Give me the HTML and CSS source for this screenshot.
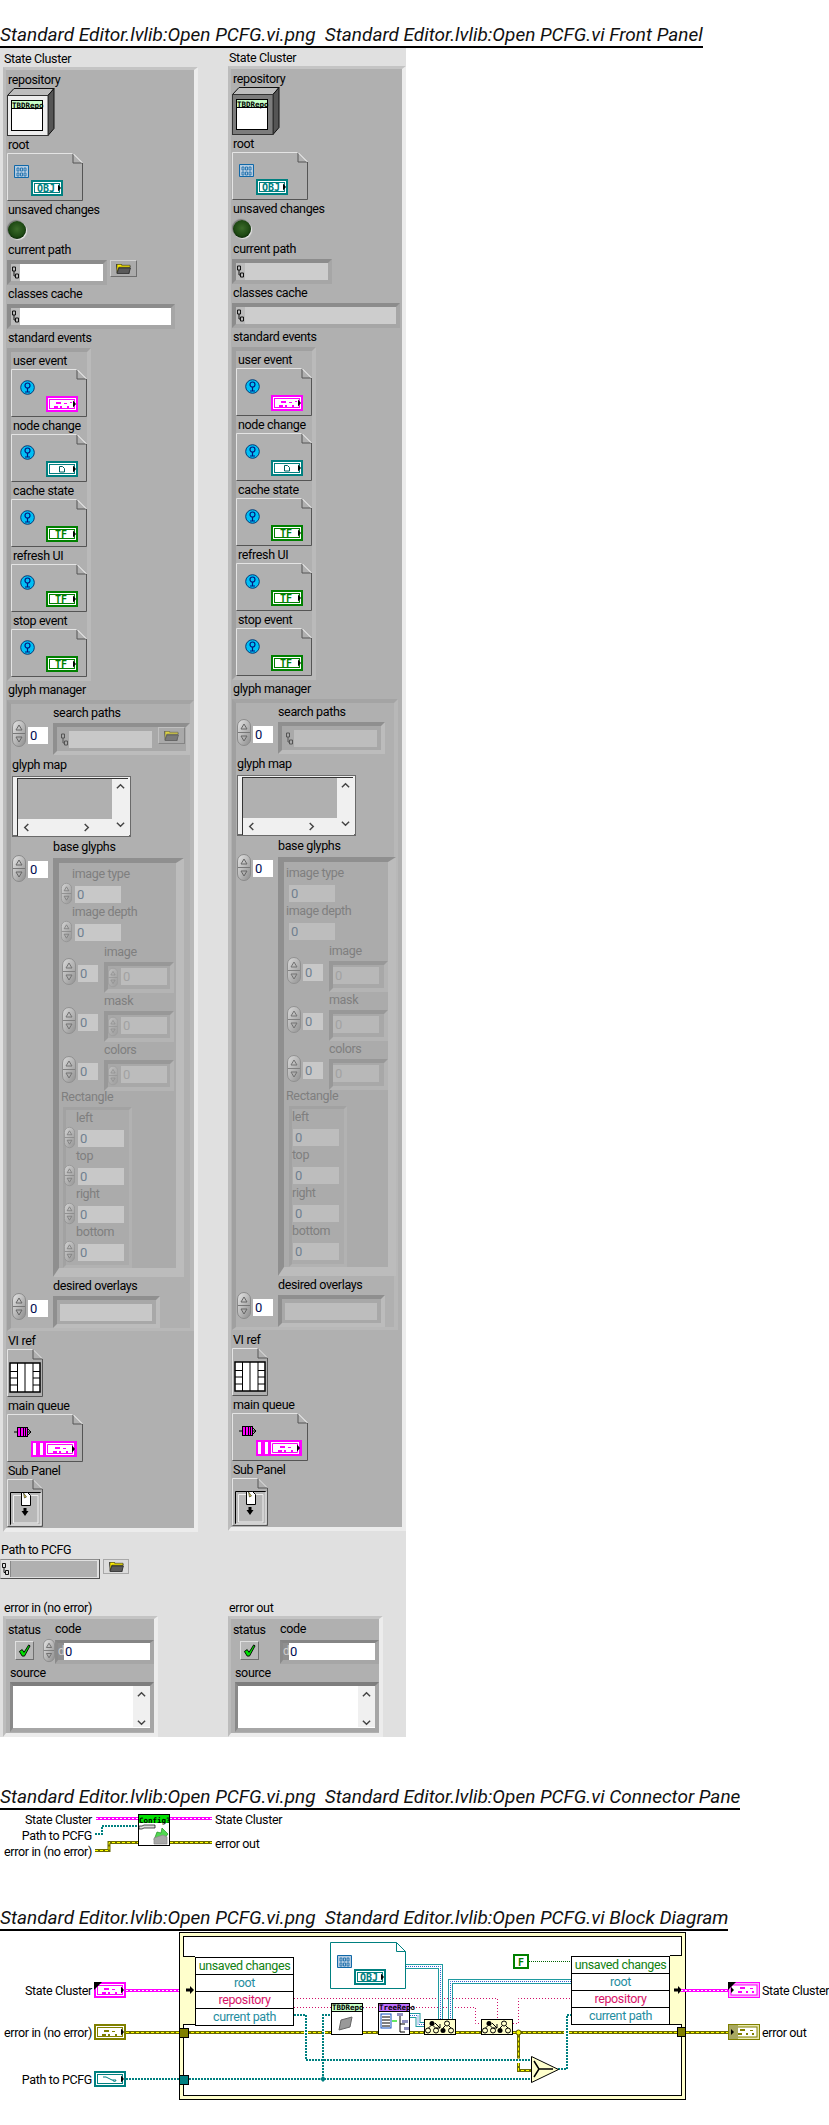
FILE: index.html
```html
<!DOCTYPE html>
<html lang="en">
<head>
<meta charset="utf-8">
<title>Open PCFG.vi</title>
<link rel="stylesheet" href="styles.css">
</head>
<body>
<svg class="defs" aria-hidden="true">
<defs>
<linearGradient id="gs" x1="0" y1="0" x2="1" y2="1"><stop offset="0" stop-color="#e6e6e6"/><stop offset="1" stop-color="#8c8c8c"/></linearGradient>
<symbol id="step" viewBox="0 0 14 27"><rect x=".5" y=".5" width="13" height="26" rx="6.5" fill="url(#gs)" stroke="#8a8a8a"/><path d="M1 13.5h12" stroke="#777"/><path d="M7 5l-3 5h6z" fill="none" stroke="#666"/><path d="M7 22l-3-5h6z" fill="none" stroke="#666"/></symbol>
<symbol id="pth" viewBox="0 0 7 12"><path d="M.5.5h3v4h-3zM3.5 7.5h3v4h-3zM2 4.5v5h1.500" fill="none" stroke="#111"/></symbol>
<symbol id="folder" viewBox="0 0 16 10"><path d="M0 0h5l1 1h-5v1h14l-1 8H2z" fill="#555" stroke="#222" stroke-width=".5"/><path d="M1 0h5v1h9v2H3L1 9z" fill="#ffee00" stroke="#222" stroke-width=".6"/><path d="M3 4h12.500l-2 6H1z" fill="#5a5a5a" stroke="#222" stroke-width=".6"/></symbol>
<symbol id="pg76" viewBox="0 0 76 48"><path d="M.5 47.500V.5H66L75.500 10" fill="none" stroke="#e4e4e4"/><path d="M.5 47.500h75V10H66V.5" fill="none" stroke="#555"/><path d="M66 .5l9.500 9.500" fill="none" stroke="#e4e4e4"/></symbol>
<symbol id="pg36" viewBox="0 0 36 48"><path d="M.5 47.500V.5H26L35.500 10" fill="none" stroke="#e4e4e4"/><path d="M.5 47.500h35V10H26V.5" fill="none" stroke="#555"/></symbol>
<symbol id="tb" viewBox="0 0 32 16"><rect width="32" height="16" fill="currentColor"/><rect x="2" y="2" width="28" height="12" fill="#fff"/><rect x="3.500" y="3.500" width="25" height="9" fill="none" stroke="currentColor"/><path d="M27 4.500l3 3.500-3 3.500z" fill="#000"/></symbol>
<symbol id="tOBJ" viewBox="0 0 32 16"><g color="#008080"><use href="#tb" width="32" height="16"/><text x="15" y="12" class="gt gt-teal">OBJ</text></g></symbol>
<symbol id="tTF" viewBox="0 0 32 16"><g color="#008000"><use href="#tb" width="32" height="16"/><text x="15" y="12" class="gt gt-green">TF</text></g></symbol>
<symbol id="tEvt" viewBox="0 0 32 16"><g color="#ff00ff"><use href="#tb" width="32" height="16"/><path d="M10 6h5v2h-5zM8 10h4v2H8zM14 10h2v2h-2zM18 7h3v1h-3zM21 10h2v2h-2zM24 6h2v1h-2z" fill="currentColor"/></g></symbol>
<symbol id="tDoc" viewBox="0 0 32 16"><g color="#008080"><use href="#tb" width="32" height="16"/><path d="M13.500 5.500h3l2 2v3.500h-5z" fill="none" stroke="#006060"/></g></symbol>
<symbol id="tQ" viewBox="0 0 46 16"><rect width="46" height="16" fill="#ff00ff"/><path d="M2 2h3v12H2zM9 2h3v12H9zM15 2h28v12H15z" fill="#fff"/><path d="M16.500 3.500h25v9h-25z" fill="none" stroke="#ff00ff"/><path d="M24 6h5v2h-5zM22 10h4v2h-4zM28 10h2v2h-2zM32 7h3v1h-3zM35 10h2v2h-2z" fill="#ff00ff"/><path d="M41 4.500l3 3.500-3 3.500z" fill="#000"/></symbol>
<symbol id="bgrid" viewBox="0 0 15 13"><path d="M.5.5h14v12H.5z" fill="#b4cbe0" stroke="#1068a8"/><path d="M3 3h2v3H3zM6.500 3h2v3h-2zM10 3h2v3h-2zM3 8h2v3H3zM6.500 8h2v3h-2zM10 8h2v3h-2z" fill="none" stroke="#1068a8" stroke-width=".8"/></symbol>
<symbol id="info" viewBox="0 0 15 15"><circle cx="7.500" cy="7.500" r="6.800" fill="#00bff5" stroke="#003a78"/><circle cx="7.500" cy="5.500" r="2.500" fill="none" stroke="#001a80" stroke-width="1.200"/><path d="M7.500 8v4M5 12h5" stroke="#001a80" stroke-width="1.200"/></symbol>
<symbol id="repo" viewBox="0 0 48 48"><path d="M.5 7.500L7 .5h40L41 7.500z" fill="#bdbdbd" stroke="#111"/><path d="M41 7.500L47 .5v40l-6 7z" fill="#555" stroke="#111"/><rect x=".5" y="7.500" width="40.500" height="40" fill="currentColor" stroke="#333"/><rect x="4.500" y="12.500" width="31" height="30" fill="#fff" stroke="#000"/><rect x="5" y="13" width="30" height="7" fill="#c8ffc8"/><path d="M4.500 20.500h31" stroke="#000"/><text x="5" y="19.500" class="hd">TBDRepo</text></symbol>
<symbol id="vgrid" viewBox="0 0 32 31"><rect x="1" y="1" width="30" height="29" fill="#fff" stroke="#000" stroke-width="1.500"/><path d="M8.500 1v29M16 1v29M24 1v29M1 9.500h7.500M24 9.500h7M1 16h7.500M24 16h7M1 23h7.500M24 23h7" stroke="#000"/></symbol>
<symbol id="queue" viewBox="0 0 18 12"><path d="M0 6h3M14 6h3M14 3l3 3-3 3" fill="none" stroke="#000"/><rect x="3.500" y="1.500" width="10" height="9" fill="#ff00ff" stroke="#000"/><path d="M6.500 1.500v9M9.500 1.500v9M11.500 1.500v9" stroke="#000"/></symbol>
<symbol id="subp" viewBox="0 0 36 48"><rect x="3" y="13" width="31" height="33" fill="#b8b8b8"/><path d="M3.500 46V13.500H34" fill="none" stroke="#000"/><path d="M34 13.500V46H3.500" fill="none" stroke="#eee"/><path d="M6.500 44V16.500H31V44z" fill="none" stroke="#eee"/><path d="M14.500 13.500h6l3 3v10h-9z" fill="#fff" stroke="#000"/><path d="M16.500 14l3 4-2 1z" fill="#e8d84a" stroke="#000" stroke-width=".5"/><path d="M16.500 29h3v3h2l-3.500 5-3.500-5h2z" fill="#000"/></symbol>
<symbol id="up" viewBox="0 0 10 7"><path d="M1 5.500l4-4 4 4" fill="none" stroke="#444" stroke-width="1.600"/></symbol>
<symbol id="dn" viewBox="0 0 10 7"><path d="M1 1.500l4 4 4-4" fill="none" stroke="#444" stroke-width="1.600"/></symbol>
<symbol id="lf" viewBox="0 0 7 10"><path d="M5.500 1l-4 4 4 4" fill="none" stroke="#444" stroke-width="1.600"/></symbol>
<symbol id="rt" viewBox="0 0 7 10"><path d="M1.500 1l4 4-4 4" fill="none" stroke="#444" stroke-width="1.600"/></symbol>
<symbol id="check" viewBox="0 0 14 14"><path d="M1.500 8l3-2 2 3 5-8 1.500 1-6 11H4.500z" fill="#00e000" stroke="#000"/></symbol>
<symbol id="tree" viewBox="0 0 32 16"><rect x=".5" y=".5" width="31" height="15" fill="#ffffcc" stroke="#000"/><circle cx="8" cy="4.500" r="2.500"/><circle cx="23" cy="4.500" r="2.500" fill="none" stroke="#000"/><circle cx="4" cy="11.500" r="2.500" fill="none" stroke="#000"/><circle cx="12" cy="11.500" r="2.500" fill="none" stroke="#000"/><circle cx="19" cy="11.500" r="2.500"/><circle cx="27" cy="11.500" r="2.500" fill="none" stroke="#000"/><path d="M11 4l5 5M16 5v4h-4M6.500 7l-2 2M9.500 7l2 2M21 7l-2 2M25 7l2 2" fill="none" stroke="#000"/></symbol>
</defs>
</svg>

<h2 class="title title-1">Standard Editor.lvlib:Open PCFG.vi.png  Standard Editor.lvlib:Open PCFG.vi Front Panel</h2>

<section class="fp">
<div class="clusters">
<div class="col col-l">
<div class="lbl lead">State Cluster</div>
<div class="main">
<div class="lbl m2">repository</div>
<svg class="i48 repo-on"><use href="#repo"/></svg>
<div class="lbl m1">root</div>
<svg class="i76"><use href="#pg76"/><use href="#bgrid" x="7" y="12" width="15" height="13"/><use href="#tOBJ" x="24" y="27" width="32" height="16"/></svg>
<div class="lbl m1">unsaved changes</div>
<div class="led"></div>
<div class="lbl">current path</div>
<div class="ctl-row"><div class="path w100"><svg class="pi"><use href="#pth"/></svg><span class="pf white"></span></div><div class="btn"><svg class="fold"><use href="#folder"/></svg></div></div>
<div class="lbl m1">classes cache</div>
<div class="path w168 m2"><svg class="pi"><use href="#pth"/></svg><span class="pf white"></span></div>
<div class="lbl m1">standard events</div>
<div class="events">
<div class="lbl ev">user event</div><svg class="i76"><use href="#pg76"/><use href="#info" x="9" y="11" width="15" height="15"/><use href="#tEvt" x="35" y="27" width="32" height="16"/></svg>
<div class="lbl ev">node change</div><svg class="i76"><use href="#pg76"/><use href="#info" x="9" y="11" width="15" height="15"/><use href="#tDoc" x="35" y="27" width="32" height="16"/></svg>
<div class="lbl ev">cache state</div><svg class="i76"><use href="#pg76"/><use href="#info" x="9" y="11" width="15" height="15"/><use href="#tTF" x="35" y="27" width="32" height="16"/></svg>
<div class="lbl ev">refresh UI</div><svg class="i76"><use href="#pg76"/><use href="#info" x="9" y="11" width="15" height="15"/><use href="#tTF" x="35" y="27" width="32" height="16"/></svg>
<div class="lbl ev">stop event</div><svg class="i76"><use href="#pg76"/><use href="#info" x="9" y="11" width="15" height="15"/><use href="#tTF" x="35" y="27" width="32" height="16"/></svg>
</div>
<div class="lbl m1">glyph manager</div>
<div class="gm">
<div class="lbl ctr">search paths</div>
<div class="arow up1"><svg class="st"><use href="#step"/></svg><div class="idx">0</div>
<div class="frame fr137"><div class="fpath"><svg class="pi dim"><use href="#pth"/></svg><span class="pf grey w83"></span></div><div class="btn dis"><svg class="fold"><use href="#folder"/></svg></div></div></div>
<div class="lbl gl">glyph map</div>
<div class="list"><div class="list-in"><div class="la"></div><div class="sv"><svg class="ch-v"><use href="#up"/></svg><svg class="ch-v"><use href="#dn"/></svg></div><div class="sh"><svg class="ch-h"><use href="#lf"/></svg><svg class="ch-h"><use href="#rt"/></svg></div></div></div>
<div class="lbl ctr ctr-b">base glyphs</div>
<div class="arow"><svg class="st"><use href="#step"/></svg><div class="idx idx-b">0</div>
<div class="arr"><div class="lbl off l-type">image type</div>
<div class="nrow"><svg class="st1"><use href="#step"/></svg><div class="num">0</div></div>
<div class="lbl off l-type2">image depth</div>
<div class="nrow"><svg class="st1"><use href="#step"/></svg><div class="num">0</div></div>
<div class="lbl off l-sub l-first">image</div>
<div class="srow"><svg class="st fade"><use href="#step"/></svg><div class="idx idx-d">0</div><div class="frame fr70"><svg class="st2"><use href="#step"/></svg><div class="num num-d">0</div></div></div>
<div class="lbl off l-sub">mask</div>
<div class="srow"><svg class="st fade"><use href="#step"/></svg><div class="idx idx-d">0</div><div class="frame fr70"><svg class="st2"><use href="#step"/></svg><div class="num num-d">0</div></div></div>
<div class="lbl off l-sub">colors</div>
<div class="srow"><svg class="st fade"><use href="#step"/></svg><div class="idx idx-d">0</div><div class="frame fr70"><svg class="st2"><use href="#step"/></svg><div class="num num-d">0</div></div></div>
<div class="lbl off l-rect">Rectangle</div>
<div class="rect">
<div class="lbl off l-f">left</div><div class="rrow"><svg class="st1"><use href="#step"/></svg><div class="num">0</div></div>
<div class="lbl off l-f">top</div><div class="rrow"><svg class="st1"><use href="#step"/></svg><div class="num">0</div></div>
<div class="lbl off l-f">right</div><div class="rrow"><svg class="st1"><use href="#step"/></svg><div class="num">0</div></div>
<div class="lbl off l-f">bottom</div><div class="rrow"><svg class="st1"><use href="#step"/></svg><div class="num">0</div></div>
</div></div></div>
<div class="lbl ctr m-over">desired overlays</div>
<div class="arow up1"><svg class="st"><use href="#step"/></svg><div class="idx">0</div>
<div class="frame fr107"><div class="fpath"><span class="pf grey w92"></span></div></div></div>
</div>
<div class="lbl m2">VI ref</div>
<svg class="i36"><use href="#pg36"/><use href="#vgrid" x="2" y="13" width="32" height="31"/></svg>
<div class="lbl m1">main queue</div>
<svg class="i76"><use href="#pg76"/><use href="#queue" x="7" y="12" width="18" height="12"/><use href="#tQ" x="24" y="27" width="46" height="16"/></svg>
<div class="lbl m1">Sub Panel</div>
<svg class="i36 last"><use href="#pg36"/><use href="#subp" width="36" height="48"/></svg>
</div>
</div>

<div class="col col-r">
<div class="lbl lead">State Cluster</div>
<div class="main">
<div class="lbl m2">repository</div>
<svg class="i48 repo-off"><use href="#repo"/></svg>
<div class="lbl m1">root</div>
<svg class="i76"><use href="#pg76"/><use href="#bgrid" x="7" y="12" width="15" height="13"/><use href="#tOBJ" x="24" y="27" width="32" height="16"/></svg>
<div class="lbl m1">unsaved changes</div>
<div class="led"></div>
<div class="lbl">current path</div>
<div class="ctl-row"><div class="path w100"><svg class="pi"><use href="#pth"/></svg><span class="pf pale"></span></div></div>
<div class="lbl m1">classes cache</div>
<div class="path w168 m2"><svg class="pi"><use href="#pth"/></svg><span class="pf pale"></span></div>
<div class="lbl m1">standard events</div>
<div class="events">
<div class="lbl ev">user event</div><svg class="i76"><use href="#pg76"/><use href="#info" x="9" y="11" width="15" height="15"/><use href="#tEvt" x="35" y="27" width="32" height="16"/></svg>
<div class="lbl ev">node change</div><svg class="i76"><use href="#pg76"/><use href="#info" x="9" y="11" width="15" height="15"/><use href="#tDoc" x="35" y="27" width="32" height="16"/></svg>
<div class="lbl ev">cache state</div><svg class="i76"><use href="#pg76"/><use href="#info" x="9" y="11" width="15" height="15"/><use href="#tTF" x="35" y="27" width="32" height="16"/></svg>
<div class="lbl ev">refresh UI</div><svg class="i76"><use href="#pg76"/><use href="#info" x="9" y="11" width="15" height="15"/><use href="#tTF" x="35" y="27" width="32" height="16"/></svg>
<div class="lbl ev">stop event</div><svg class="i76"><use href="#pg76"/><use href="#info" x="9" y="11" width="15" height="15"/><use href="#tTF" x="35" y="27" width="32" height="16"/></svg>
</div>
<div class="lbl m1">glyph manager</div>
<div class="gm gm-r">
<div class="lbl ctr">search paths</div>
<div class="arow up1"><svg class="st"><use href="#step"/></svg><div class="idx">0</div>
<div class="frame fr107"><div class="fpath"><svg class="pi dim"><use href="#pth"/></svg><span class="pf grey2 w83"></span></div></div></div>
<div class="lbl gl">glyph map</div>
<div class="list"><div class="list-in"><div class="la"></div><div class="sv"><svg class="ch-v"><use href="#up"/></svg><svg class="ch-v"><use href="#dn"/></svg></div><div class="sh"><svg class="ch-h"><use href="#lf"/></svg><svg class="ch-h"><use href="#rt"/></svg></div></div></div>
<div class="lbl ctr ctr-b">base glyphs</div>
<div class="arow"><svg class="st"><use href="#step"/></svg><div class="idx idx-b">0</div>
<div class="arr arr-r"><div class="lbl off l-type-r">image type</div>
<div class="nrow nrow-r"><div class="num num-r">0</div></div>
<div class="lbl off l-type-r2">image depth</div>
<div class="nrow nrow-r"><div class="num num-r">0</div></div>
<div class="lbl off l-sub l-first">image</div>
<div class="srow"><svg class="st fade"><use href="#step"/></svg><div class="idx idx-d">0</div><div class="frame fr59"><div class="num num-d">0</div></div></div>
<div class="lbl off l-sub">mask</div>
<div class="srow"><svg class="st fade"><use href="#step"/></svg><div class="idx idx-d">0</div><div class="frame fr59"><div class="num num-d">0</div></div></div>
<div class="lbl off l-sub">colors</div>
<div class="srow"><svg class="st fade"><use href="#step"/></svg><div class="idx idx-d">0</div><div class="frame fr59"><div class="num num-d">0</div></div></div>
<div class="lbl off l-rect">Rectangle</div>
<div class="rect rect-r">
<div class="lbl off l-f-r">left</div><div class="rrow rrow-r"><div class="num num-r">0</div></div>
<div class="lbl off l-f-r">top</div><div class="rrow rrow-r"><div class="num num-r">0</div></div>
<div class="lbl off l-f-r">right</div><div class="rrow rrow-r"><div class="num num-r">0</div></div>
<div class="lbl off l-f-r">bottom</div><div class="rrow rrow-r"><div class="num num-r">0</div></div>
</div></div></div>
<div class="lbl ctr m-over">desired overlays</div>
<div class="arow up1"><svg class="st"><use href="#step"/></svg><div class="idx">0</div>
<div class="frame fr107"><div class="fpath"><span class="pf grey2 w92"></span></div></div></div>
</div>
<div class="lbl m2">VI ref</div>
<svg class="i36"><use href="#pg36"/><use href="#vgrid" x="2" y="13" width="32" height="31"/></svg>
<div class="lbl m1">main queue</div>
<svg class="i76"><use href="#pg76"/><use href="#queue" x="7" y="12" width="18" height="12"/><use href="#tQ" x="24" y="27" width="46" height="16"/></svg>
<div class="lbl m1">Sub Panel</div>
<svg class="i36 last"><use href="#pg36"/><use href="#subp" width="36" height="48"/></svg>
</div>
</div>
</div>

<div class="lbl ptp">Path to PCFG</div>
<div class="ptp-row"><div class="ptp-f"><svg class="pi"><use href="#pth"/></svg><span class="ptp-in"></span></div><div class="btn btn-l"><svg class="fold"><use href="#folder"/></svg></div></div>

<div class="errs">
<div class="err">
<div class="lbl lead">error in (no error)</div>
<div class="ebox">
<div class="ehead"><div class="lbl e-st">status</div><div class="lbl e-co">code</div></div>
<div class="erow"><div class="okb"><svg class="ck"><use href="#check"/></svg></div><svg class="st-e"><use href="#step"/></svg><div class="ecode"><span class="ed">d</span><span class="ev0">0</span></div></div>
<div class="lbl e-so">source</div>
<div class="esrc"><div class="esw"><svg class="ch-v"><use href="#up"/></svg><svg class="ch-v"><use href="#dn"/></svg></div></div>
</div>
</div>
<div class="err err-r">
<div class="lbl lead">error out</div>
<div class="ebox">
<div class="ehead"><div class="lbl e-st">status</div><div class="lbl e-co">code</div></div>
<div class="erow"><div class="okb"><svg class="ck"><use href="#check"/></svg></div><div class="ecode ecode-r"><span class="ed">d</span><span class="ev0">0</span></div></div>
<div class="lbl e-so">source</div>
<div class="esrc"><div class="esw"><svg class="ch-v"><use href="#up"/></svg><svg class="ch-v"><use href="#dn"/></svg></div></div>
</div>
</div>
</div>
</section>

<h2 class="title title-2">Standard Editor.lvlib:Open PCFG.vi.png  Standard Editor.lvlib:Open PCFG.vi Connector Pane</h2>
<svg class="pane" viewBox="0 1810 829 97">
<text x="92" y="1824" class="t e">State Cluster</text>
<text x="92" y="1840" class="t e">Path to PCFG</text>
<text x="92" y="1856" class="t e">error in (no error)</text>
<text x="215" y="1824" class="t">State Cluster</text>
<text x="215" y="1848" class="t">error out</text>
<path class="wm" d="M96 1818.500h42M170 1818.500h42"/><path class="wm2" d="M96 1818.500h42M170 1818.500h42"/>
<path class="wp" d="M95 1834h7v-8h36"/>
<path class="we" d="M95 1850.500h14v-8h29M170 1842.500h42"/><path class="we2" d="M95 1850.500h14v-8h29M170 1842.500h42"/>
<rect x="138.500" y="1814.500" width="31" height="31" fill="#fff" stroke="#000"/>
<rect x="139" y="1815" width="30" height="8" fill="#00e000"/>
<text x="139" y="1822.500" class="hd">Config?</text>
<path d="M139 1826h3l2-1h11v3h-11l-2 1h-3z" fill="#ddd" stroke="#000" stroke-width=".7"/>
<path d="M154 1840l3-8 4 1 1-5 6 6-5 6z" fill="#50d850" stroke="#209020" stroke-width=".7"/>
<path d="M154 1844v-6l9-3 4 2v7z" fill="#a8a8a8" stroke="#888" stroke-width=".7"/>
</svg>

<h2 class="title title-3">Standard Editor.lvlib:Open PCFG.vi.png  Standard Editor.lvlib:Open PCFG.vi Block Diagram</h2>
<svg class="bd" viewBox="0 1931 829 194">
<rect x="179.500" y="1932.500" width="506" height="167" fill="#ffffcc" stroke="#000"/>
<rect x="183.500" y="1936.500" width="498" height="159" fill="#fff" stroke="#000"/>
<rect x="181" y="1957" width="14" height="68" fill="#ffffcc"/>
<rect x="670" y="1956" width="14" height="68" fill="#ffffcc"/>
<path d="M183 1956.500h12M183 2024.500h12M670 1955.500h12M670 2024.500h12" stroke="#000" fill="none"/>
<path d="M186 1988.500h4v-2.500l4 4-4 4v-2.500h-4z" fill="#000"/>
<path d="M674 1988.500h4v-2.500l4 4-4 4v-2.500h-4z" fill="#000"/>

<path class="wr" d="M294 1998.500h203.500v21M294 2007.500h37M363 2007.500h15M410 2007.500h65.500v16h6"/>
<path class="wr" d="M513 2023.500h5.500v-25h52.500"/>
<path class="wg" d="M529 1961.500h42"/>

<path class="we" d="M126 2032.500h178M308 2032.500h14M325 2032.500h6M363 2032.500h15M410 2032.500h14M456 2032.500h25M513 2032.500h51M569 2032.500h108M686 2032.500h42M518.500 2032.500v26M518.500 2063v7.500h12.500"/>
<path class="we2" d="M126 2032.500h178M308 2032.500h14M325 2032.500h6M363 2032.500h15M410 2032.500h14M456 2032.500h25M513 2032.500h51M569 2032.500h108M686 2032.500h42M518.500 2032.500v26M518.500 2063v7.500h12.500"/>
<path class="wm" d="M126 1990.500h53M681 1990.500h47"/><path class="wm2" d="M126 1990.500h53M681 1990.500h47"/>
<path class="wp" d="M126 2079h405M323 2079v-64h8M294 2015h12v45h225M558 2069h9v-54h4"/>
<path class="wt" d="M406 1966.500h34.500v53M571 1981.500H450.500v38M410 2015.500h8v9h6"/>
<path class="wt2" d="M406 1966.500h34.500v53M571 1981.500H450.500v38M410 2015.500h8v9h6"/>
<path class="wt3" d="M406 1966.500h34.500v53M571 1981.500H450.500v38M410 2015.500h8v9h6"/>

<rect x="179.500" y="2028.500" width="9" height="9" fill="#808000" stroke="#000"/>
<rect x="179.500" y="2075.500" width="9" height="9" fill="#008080" stroke="#000"/>
<rect x="677.500" y="2027.500" width="8" height="9" fill="#808000" stroke="#000"/>
<path d="M323 2076l3 3-3 3-3-3z" fill="#008080"/>
<circle cx="518.500" cy="2032.500" r="2.500" fill="#ffff00" stroke="#5a5a00"/>

<rect x="195.500" y="1957.500" width="98" height="68" fill="#fff" stroke="#000"/>
<path d="M195 1974.500h99M195 1991.500h99M195 2008.500h99" stroke="#000"/>
<text x="244.500" y="1970" class="t m cg">unsaved changes</text>
<text x="244.500" y="1987" class="t m ct">root</text>
<text x="244.500" y="2004" class="t m cp">repository</text>
<text x="244.500" y="2021" class="t m ct">current path</text>

<rect x="571.500" y="1956.500" width="98" height="68" fill="#fff" stroke="#000"/>
<path d="M571 1973.500h99M571 1990.500h99M571 2007.500h99" stroke="#000"/>
<text x="620.500" y="1969" class="t m cg">unsaved changes</text>
<text x="620.500" y="1986" class="t m ct">root</text>
<text x="620.500" y="2003" class="t m cp">repository</text>
<text x="620.500" y="2020" class="t m ct">current path</text>

<path d="M330.500 1942.500h66l9 9v37h-75z" fill="#fff" stroke="#008080"/>
<path d="M396.500 1942.500v9h9" fill="none" stroke="#008080"/>
<use href="#bgrid" x="337" y="1955" width="15" height="13"/>
<use href="#tOBJ" x="354" y="1969" width="32" height="16"/>

<rect x="331.500" y="2003.500" width="31" height="31" fill="#fff" stroke="#000"/>
<rect x="332" y="2004" width="30" height="7" fill="#c8ffc8"/>
<path d="M331 2011.500h32" stroke="#000"/>
<text x="332" y="2010" class="hd">TBDRepo</text>
<path d="M339 2030l2-10 11-3-2 10z" fill="#999" stroke="#666"/>
<rect x="378.500" y="2003.500" width="31" height="31" fill="#fff" stroke="#000"/>
<rect x="379" y="2004" width="30" height="7" fill="#c070ff"/>
<path d="M378 2011.500h32" stroke="#000"/>
<text x="379" y="2010" class="hd">TreeRepo</text>
<rect x="381" y="2014" width="10" height="14" fill="#fff" stroke="#1050c0"/>
<path d="M382 2017h8M382 2020h8M382 2023h8M382 2026h8" stroke="#000"/>
<path d="M392 2021h5" stroke="#30e030" stroke-width="1.500"/>
<path d="M400 2016v16h5M400 2024h5" fill="none" stroke="#000"/>
<path d="M397 2013h6v3h-6zM402 2020h6v3h-6zM404 2027h5v3h-5z" fill="#9090c0"/>

<use href="#tree" x="424" y="2019" width="32" height="16"/>
<use href="#tree" x="481" y="2019" width="32" height="16"/>

<path d="M531.500 2056.500l27 13-27 13z" fill="#ffffcc" stroke="#000"/>
<path d="M534 2061l5 8-5 8M539 2069h14" fill="none" stroke="#000" stroke-width="1.500"/>

<rect x="513" y="1954" width="16" height="15" fill="#008000"/>
<rect x="515" y="1956" width="12" height="11" fill="#fff"/>
<text x="521" y="1965.500" class="gt gt-green">F</text>

<text x="92" y="1995" class="t e">State Cluster</text>
<text x="92" y="2037" class="t e">error in (no error)</text>
<text x="92" y="2084" class="t e">Path to PCFG</text>
<text x="762" y="1995" class="t">State Cluster</text>
<text x="762" y="2037" class="t">error out</text>

<g color="#ff00ff"><use href="#tb" x="94" y="1982" width="32" height="16"/></g>
<path d="M104 1988h5v2h-5zM102 1992h4v2h-4zM108 1992h2v2h-2zM112 1989h3v1h-3zM115 1992h2v2h-2z" fill="#ff00ff"/>
<path d="M94 1982h8l-8 8z" fill="#000"/>
<g color="#808000"><use href="#tb" x="94" y="2024" width="32" height="16"/></g>
<path d="M104 2030h5v2h-5zM102 2034h4v2h-4zM108 2034h2v2h-2zM112 2031h3v1h-3zM115 2034h2v2h-2z" fill="#808000"/>
<g color="#008080"><use href="#tb" x="94" y="2071" width="32" height="16"/></g>
<path d="M103 2077h3l6 3h4M113 2080a1 1 0 1 0 3 0" fill="none" stroke="#008080"/>

<rect x="728.500" y="1982.500" width="31" height="15" fill="#ffb0ff" stroke="#ff00ff"/>
<rect x="731" y="1985" width="26" height="10" fill="#fff" stroke="#ff00ff"/>
<path d="M728 1982h8l-8 8z" fill="#000"/>
<path d="M731 1987l3 3-3 3z" fill="#000"/>
<path d="M740 1987h5v2h-5zM738 1991h4v2h-4zM746 1991h2v2h-2zM750 1988h3v1h-3zM752 1991h2v2h-2z" fill="#ff00ff"/>
<rect x="728.500" y="2024.500" width="31" height="15" fill="#e8e8b0" stroke="#808000"/>
<rect x="731" y="2027" width="26" height="10" fill="#fff" stroke="#808000"/>
<rect x="729" y="2025" width="9" height="14" fill="#a8a860"/>
<path d="M731 2029l3 3-3 3z" fill="#000"/>
<path d="M740 2029h5v2h-5zM738 2033h4v2h-4zM746 2033h2v2h-2zM750 2030h3v1h-3zM752 2033h2v2h-2z" fill="#808000"/>
</svg>
</body>
</html>
```

FILE: styles.css
```css
*{box-sizing:border-box}
html,body{margin:0;padding:0;background:#fff}
body{width:829px;height:2125px;overflow:hidden;font-family:Roboto,"Noto Sans",sans-serif;font-size:13px;color:#000}
.defs{position:absolute;width:0;height:0}
.title{margin:0;display:table;height:24px;line-height:21px;border-bottom:2px solid #000;font-family:Roboto,sans-serif;font-style:italic;font-weight:400;font-size:19px;color:#111;white-space:pre}
.title-1{margin-top:24px}
.title-2{margin-top:49px}
.title-3{margin-top:0}
.fp{width:406px;height:1689px;background:#e0e0e0;overflow:hidden;padding-top:3px}
.clusters{display:flex;align-items:flex-start}
.col-l{margin-left:3px;width:195px}
.col-r{margin-left:30px;width:178px;margin-top:-1px}
.lbl{height:16px;line-height:16px;white-space:nowrap;font-size:12.500px;letter-spacing:-.35px}
.lead{margin-left:1px}
svg{display:block}
.main{border-style:solid;border-width:3px 4px 4px 3px;border-color:#c4c4c4 #ececec #ececec #bcbcbc;background:#b0b0b0;padding-left:1px}
.main>.lbl{margin-left:1px}
.m1{margin-top:1px}
.m2{margin-top:2px}
.i48{width:48px;height:48px}
.repo-on{color:#ededed}
.repo-off{color:#7c7c7c}
.i76{width:76px;height:48px}
.i36{width:36px;height:48px}
.last{margin-bottom:1px}
.led{width:18px;height:18px;border-radius:50%;margin:3px 0 3px 1px;background:radial-gradient(circle at 50% 45%,#3b6b2a 0,#1f4a14 55%,#0c2a08 75%);box-shadow:1px 1px 1px #e8e8e8,-1px -1px 1px #7a7a7a}
.ctl-row{display:flex;margin-top:2px}
.path{display:flex;height:25px;border-style:solid;border-width:4px;border-color:#8c8c8c #a6a6a6 #a6a6a6 #8c8c8c;background:#a6a6a6}
.w100{width:100px}
.w168{width:168px}
.pi{width:9px;height:17px;padding:2px 1px;background:#bcbcbc;flex:none}
.dim{opacity:.55;background:#ababab}
.pf{display:block;height:17px;flex:1}
.white{background:#fff}
.pale{background:#cdcdcd}
.grey{background:#c8c8c8}
.grey2{background:#bdbdbd}
.w83{width:83px;flex:none}
.w92{width:92px;flex:none}
.btn{width:27px;height:17px;margin-left:3px;background:#ababab;border:1px solid;border-color:#d0d0d0 #6e6e6e #6e6e6e #d0d0d0;display:flex;align-items:center;justify-content:center}
.fold{width:15px;height:10px}
.dis{margin-left:6px;opacity:.6}
.events{width:84px;margin-top:2px;border-style:solid;border-width:4px;border-color:#a0a0a0 #bababa #bababa #a0a0a0;background:#b0b0b0}
.ev{margin:1px 0 0 2px}
.gm{width:187px;margin-top:2px;border-style:solid;border-width:4px 4px 3px 4px;border-color:#a4a4a4 #b8b8b8 #b8b8b8 #a0a0a0;background:#b0b0b0}
.gm-r{width:166px}
.ctr{margin-left:42px;margin-top:1px}
.ctr-b{margin-top:2px}
.arow{display:flex;align-items:flex-start;margin-left:1px}
.up1{margin-top:-1px}
.st{width:14px;height:27px;flex:none}
.idx{width:20px;height:17px;margin:7px 0 0 2px;background:#fff;line-height:17px;padding-left:2px;flex:none;font-size:13px;color:#000a50}
.idx-b{margin-top:6px}
.frame{display:flex;align-items:flex-start;height:32px;margin:3px 0 0 5px;border-style:solid;border-width:4px;border-color:#8f8f8f #bcbcbc #bcbcbc #8f8f8f;background:#a8a8a8}
.fr137{width:137px}
.fr107{width:107px}
.fpath{display:flex;margin:4px 0 0 3px}
.gl{margin:2px 0 0 1px}
.list{width:119px;height:61px;margin:3px 0 0 1px;background:#f0f0f0;border:1px solid #6a6a6a;border-bottom-width:2px;padding:1px 2px 0 4px}
.list-in{display:grid;grid-template-columns:94px 17px;grid-template-rows:40px 17px;border-left:1px solid #333;border-top:1px solid #333}
.la{background:#b0b0b0}
.sv{grid-row:1/3;grid-column:2;display:flex;flex-direction:column;justify-content:space-between;align-items:center;padding:4px 0 8px;background:#f0f0f0}
.sh{display:flex;justify-content:space-between;align-items:center;padding:0 22px 0 5px;background:#f0f0f0;grid-column:1;grid-row:2}
.ch-v{width:9px;height:7px}
.ch-h{width:7px;height:9px}
.arr{width:131px;height:419px;margin:3px 0 0 5px;border-style:solid;border-width:5px 8px 9px 6px;border-color:#8f8f8f #bcbcbc #bcbcbc #8f8f8f;background:#ababab;color:#7f7f7f}
.arr-r{width:119px}
.off{color:#7f7f7f}
.l-type{margin:3px 0 0 13px}
.l-type2{margin:0 0 0 13px}
.l-type-r{margin:3px 0 0 2px}
.l-type-r2{margin:0 0 0 2px}
.nrow{display:flex;height:22px;margin-left:2px}
.nrow-r{margin-left:5px}
.nrow .num,.rrow .num{margin:4px 0 0 3px}
.nrow-r .num,.rrow-r .num{margin-left:0}
.st1{width:11px;height:23px;opacity:.7;flex:none}
.num{width:46px;height:17px;background:#c8c8c8;line-height:17px;padding-left:2px;color:#70808f;font-size:13px;flex:none}
.num-r{background:#bdbdbd}
.l-sub{margin:0 0 0 45px}
.l-first{margin-top:2px}
.srow{display:flex;align-items:flex-start;height:35px;margin:-2px 0 0 3px}
.fade{opacity:.8}
.idx-d{background:#c8c8c8;color:#70808f}
.fr70{width:70px;height:31px;margin:4px 0 0 6px;border-color:#989898 #b4b4b4 #b4b4b4 #989898}
.fr59{width:59px;height:31px;margin:4px 0 0 6px;border-color:#989898 #b4b4b4 #b4b4b4 #989898}
.st2{width:10px;height:23px;opacity:.4;flex:none}
.num-d{margin:2px 0 0 3px;color:#a2a2a2;background:#bcbcbc}
.fr59 .num-d{margin-left:0;background:#b8b8b8}
.l-rect{margin:-2px 0 0 2px}
.rect{width:69px;height:161px;margin:2px 0 0 4px;border:3px solid;border-color:#a2a2a2 #b2b2b2 #b2b2b2 #a2a2a2;background:#ababab}
.rect-r{width:58px;margin-left:5px}
.l-f{margin-left:10px}
.l-f-r{margin-left:0}
.rrow{display:flex;height:22px;margin-left:-2px}
.rrow-r{margin-left:1px}
.m-over{margin-top:1px}
.ptp{margin:10px 0 0 1px}
.ptp-row{display:flex;margin-top:1px}
.ptp-f{display:flex;width:100px;height:20px;border:1px solid;border-color:#8c8c8c #505050 #505050 #c0c0c0;padding:1px 2px 1px 0}
.ptp-f .pi{height:16px;background:transparent;width:9px}
.ptp-in{flex:1;background:#b0b0b0;border-left:1px solid #888}
.btn-l{width:26px;height:15px;background:#dcdcdc;border:1px solid #a8a8a8}
.errs{display:flex;margin-top:21px}
.err{width:155px;margin-left:3px}
.err-r{margin-left:70px}
.ebox{width:155px;height:121px;border-style:solid;border-width:3px 4px 4px 3px;border-color:#c4c4c4 #ececec #ececec #bcbcbc;background:#b0b0b0}
.ehead{display:flex}
.e-st{margin:3px 0 0 2px;width:47px}
.e-co{margin-top:2px}
.erow{display:flex;align-items:flex-start;margin-top:-1px;height:29px}
.okb{width:19px;height:19px;margin:4px 0 0 9px;background:#b8b8b8;border:1px solid;border-color:#e0e0e0 #707070 #707070 #e0e0e0;display:flex;align-items:center;justify-content:center}
.ck{width:13px;height:13px}
.st-e{width:12px;height:25px;margin:1px 0 0 9px}
.ecode{display:flex;width:99px;height:24px;margin:3px 0 0 0;border-style:solid;border-width:3px 4px 4px 3px;border-color:#858585 #a6a6a6 #a6a6a6 #8a8a8a;background:#a6a6a6;line-height:17px}
.ecode-r{margin-left:21px}
.ed{width:6px;color:#cfcfcf;background:#8f8f8f;font-size:12px;overflow:hidden}
.ev0{flex:1;background:#fff;padding-left:1px;color:#000a50;height:17px}
.e-so{margin:-1px 0 0 4px}
.esrc{display:flex;justify-content:flex-end;width:144px;height:50px;margin:1px 0 0 4px;border-style:solid;border-width:4px 4px 4px 3px;border-color:#7e7e7e #a6a6a6 #a6a6a6 #8a8a8a;background:#fff}
.esw{width:17px;height:41px;background:#f0f0f0;display:flex;flex-direction:column;align-items:center;justify-content:space-between;padding:5px 0 1px}
.pane{width:829px;height:97px}
.bd{width:829px;height:194px}
.t{font-family:Roboto,sans-serif;font-size:12.500px;letter-spacing:-.35px;fill:#000}
.e{text-anchor:end}
.m{text-anchor:middle}
.cg{fill:#108010}
.ct{fill:#1f8da0}
.cp{fill:#d81468}
.hd{font-family:"DejaVu Sans Mono",monospace;font-size:7.500px;font-weight:700;fill:#000}
.gt{font-family:"DejaVu Sans Mono",monospace;font-size:10px;font-weight:700;text-anchor:middle}
.gt-teal{fill:#008080}
.gt-green{fill:#008000}
.wm,.wm2,.wp,.we,.we2,.wt,.wt2,.wt3,.wr,.wg{fill:none}
.wm{stroke:#ff00ff;stroke-width:3}
.wm2{stroke:#fff;stroke-width:1;stroke-dasharray:2 2}
.we{stroke:#6b6b00;stroke-width:3}
.we2{stroke:#ffff00;stroke-width:1;stroke-dasharray:3 2}
.wp{stroke:#008080;stroke-width:2;stroke-dasharray:2 1}
.wt{stroke:#1f9aa0;stroke-width:5}
.wt2{stroke:#fff;stroke-width:3}
.wt3{stroke:#3060d0;stroke-width:1;stroke-dasharray:1 1}
.wr{stroke:#d0106a;stroke-width:1;stroke-dasharray:1 2}
.wg{stroke:#006400;stroke-width:1;stroke-dasharray:1 1}
```
